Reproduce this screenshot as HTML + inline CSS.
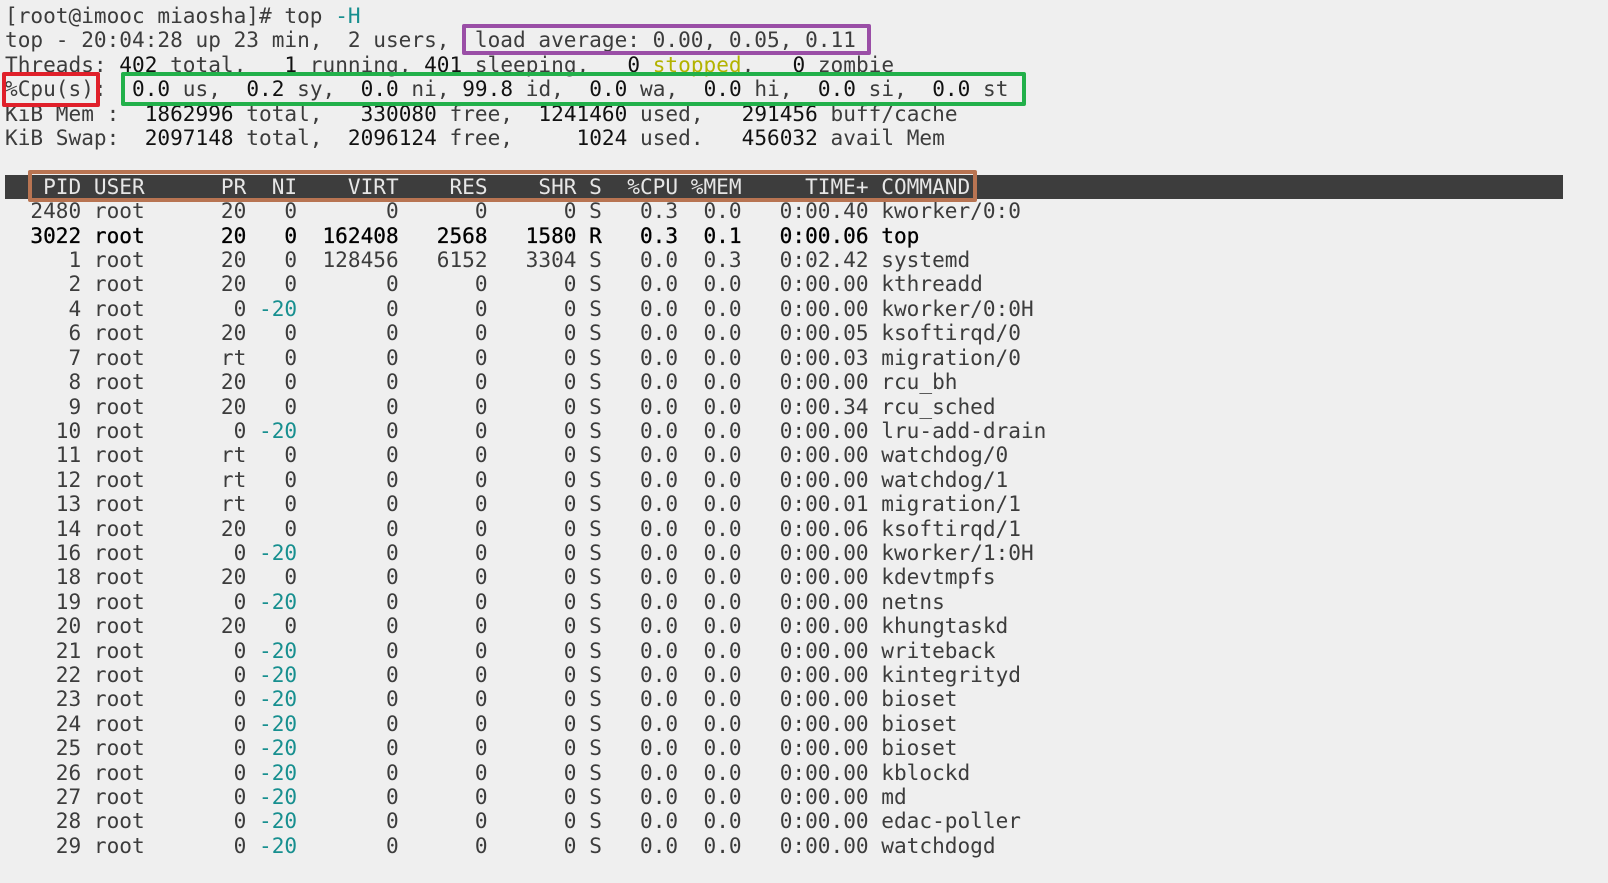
<!DOCTYPE html>
<html><head><meta charset="utf-8"><style>
html,body{margin:0;padding:0;background:#efefef;width:1608px;height:883px;overflow:hidden}
pre{position:absolute;left:5px;top:4px;margin:0;font-family:"DejaVu Sans Mono","Liberation Mono",monospace;font-size:21.1px;line-height:24.4px;color:#3c3c3c;white-space:pre}
b{color:#111;font-weight:normal}
.t{color:#178f8f}
.y{color:#b3b300}
.bar{position:absolute;left:5px;top:175px;width:1558px;height:24px;background:#3d3d3d}
.hd{color:#e6e6e6}
.top{color:#000;-webkit-text-stroke:0.3px #000}
.box{position:absolute;border:4px solid;box-sizing:border-box;border-radius:2px}
</style></head><body>
<div class="bar"></div>
<pre>[root@imooc miaosha]# top <span class="t">-H</span>
top - 20:04:28 up 23 min,  2 users,  load average: 0.00, 0.05, 0.11
Threads: <b>402</b> total,   <b>1</b> running, <b>401</b> sleeping,   <b>0</b> <span class="y">stopped</span>,   <b>0</b> zombie
%Cpu(s):  <b>0.0</b> us,  <b>0.2</b> sy,  <b>0.0</b> ni, <b>99.8</b> id,  <b>0.0</b> wa,  <b>0.0</b> hi,  <b>0.0</b> si,  <b>0.0</b> st
KiB Mem :  <b>1862996</b> total,   <b>330080</b> free,  <b>1241460</b> used,   <b>291456</b> buff/cache
KiB Swap:  <b>2097148</b> total,  <b>2096124</b> free,     <b>1024</b> used.   <b>456032</b> avail Mem

<span class="hd">   PID USER      PR  NI    VIRT    RES    SHR S  %CPU %MEM     TIME+ COMMAND</span>
  2480 root      20   0       0      0      0 S   0.3  0.0   0:00.40 kworker/0:0
<span class="top">  3022 root      20   0  162408   2568   1580 R   0.3  0.1   0:00.06 top</span>
     1 root      20   0  128456   6152   3304 S   0.0  0.3   0:02.42 systemd
     2 root      20   0       0      0      0 S   0.0  0.0   0:00.00 kthreadd
     4 root       0 <span class="t">-20</span>       0      0      0 S   0.0  0.0   0:00.00 kworker/0:0H
     6 root      20   0       0      0      0 S   0.0  0.0   0:00.05 ksoftirqd/0
     7 root      rt   0       0      0      0 S   0.0  0.0   0:00.03 migration/0
     8 root      20   0       0      0      0 S   0.0  0.0   0:00.00 rcu_bh
     9 root      20   0       0      0      0 S   0.0  0.0   0:00.34 rcu_sched
    10 root       0 <span class="t">-20</span>       0      0      0 S   0.0  0.0   0:00.00 lru-add-drain
    11 root      rt   0       0      0      0 S   0.0  0.0   0:00.00 watchdog/0
    12 root      rt   0       0      0      0 S   0.0  0.0   0:00.00 watchdog/1
    13 root      rt   0       0      0      0 S   0.0  0.0   0:00.01 migration/1
    14 root      20   0       0      0      0 S   0.0  0.0   0:00.06 ksoftirqd/1
    16 root       0 <span class="t">-20</span>       0      0      0 S   0.0  0.0   0:00.00 kworker/1:0H
    18 root      20   0       0      0      0 S   0.0  0.0   0:00.00 kdevtmpfs
    19 root       0 <span class="t">-20</span>       0      0      0 S   0.0  0.0   0:00.00 netns
    20 root      20   0       0      0      0 S   0.0  0.0   0:00.00 khungtaskd
    21 root       0 <span class="t">-20</span>       0      0      0 S   0.0  0.0   0:00.00 writeback
    22 root       0 <span class="t">-20</span>       0      0      0 S   0.0  0.0   0:00.00 kintegrityd
    23 root       0 <span class="t">-20</span>       0      0      0 S   0.0  0.0   0:00.00 bioset
    24 root       0 <span class="t">-20</span>       0      0      0 S   0.0  0.0   0:00.00 bioset
    25 root       0 <span class="t">-20</span>       0      0      0 S   0.0  0.0   0:00.00 bioset
    26 root       0 <span class="t">-20</span>       0      0      0 S   0.0  0.0   0:00.00 kblockd
    27 root       0 <span class="t">-20</span>       0      0      0 S   0.0  0.0   0:00.00 md
    28 root       0 <span class="t">-20</span>       0      0      0 S   0.0  0.0   0:00.00 edac-poller
    29 root       0 <span class="t">-20</span>       0      0      0 S   0.0  0.0   0:00.00 watchdogd</pre>
<div class="box" style="left:462px;top:24px;width:409px;height:31px;border-color:#9a4ea6"></div>
<div class="box" style="left:2px;top:72px;width:98px;height:35px;border-color:#e0202a"></div>
<div class="box" style="left:121px;top:72px;width:905px;height:34px;border-color:#22b04a"></div>
<div class="box" style="left:28px;top:170px;width:949px;height:32px;border-color:#b87452"></div>
</body></html>
